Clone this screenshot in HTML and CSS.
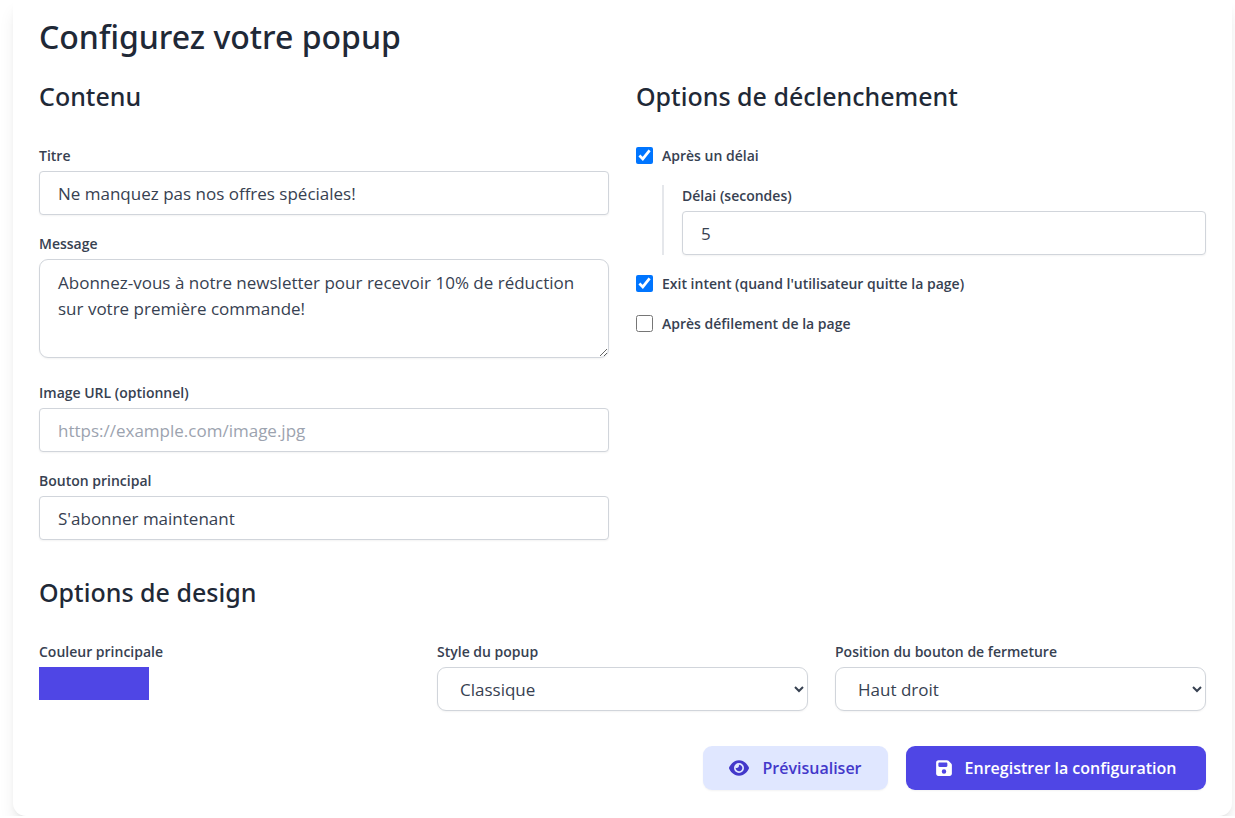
FILE: index.html
```html
<!DOCTYPE html>
<html lang="fr">
<head>
<meta charset="utf-8">
<meta name="viewport" content="width=device-width, initial-scale=1">
<title>Configurez votre popup</title>
<link rel="stylesheet" href="styles.css">
</head>
<body>
<main class="card">
  <h1 class="title">Configurez votre popup</h1>
  <form class="form">
    <div class="columns">
      <section class="section">
        <h2 class="heading">Contenu</h2>
        <div class="fields">
          <div class="field">
            <label class="label" for="titre">Titre</label>
            <input class="input" id="titre" type="text" value="Ne manquez pas nos offres spéciales!">
          </div>
          <div class="field field-message">
            <label class="label" for="message">Message</label>
            <textarea class="input textarea" id="message" rows="3">Abonnez-vous à notre newsletter pour recevoir 10% de réduction sur votre première commande!</textarea>
          </div>
          <div class="field">
            <label class="label" for="image">Image URL (optionnel)</label>
            <input class="input" id="image" type="text" placeholder="https://example.com/image.jpg">
          </div>
          <div class="field">
            <label class="label" for="bouton">Bouton principal</label>
            <input class="input" id="bouton" type="text" value="S'abonner maintenant">
          </div>
        </div>
      </section>
      <section class="section">
        <h2 class="heading">Options de déclenchement</h2>
        <div class="fields">
          <div class="check">
            <input class="checkbox" id="delai-actif" type="checkbox" checked>
            <label class="label" for="delai-actif">Après un délai</label>
          </div>
          <div class="field nested">
            <label class="label" for="delai">Délai (secondes)</label>
            <input class="input" id="delai" type="number" value="5">
          </div>
          <div class="check">
            <input class="checkbox" id="exit" type="checkbox" checked>
            <label class="label" for="exit">Exit intent (quand l'utilisateur quitte la page)</label>
          </div>
          <div class="check">
            <input class="checkbox" id="scroll" type="checkbox">
            <label class="label" for="scroll">Après défilement de la page</label>
          </div>
        </div>
      </section>
    </div>
    <section class="section">
      <h2 class="heading">Options de design</h2>
      <div class="columns columns-three">
        <div class="field">
          <label class="label" for="couleur">Couleur principale</label>
          <input class="swatch" id="couleur" type="color" value="#4f46e5">
        </div>
        <div class="field">
          <label class="label" for="style">Style du popup</label>
          <select class="input select" id="style"><option>Classique</option></select>
        </div>
        <div class="field">
          <label class="label" for="position">Position du bouton de fermeture</label>
          <select class="input select" id="position"><option>Haut droit</option></select>
        </div>
      </div>
    </section>
    <div class="actions">
      <button class="button button-light" type="button">
        <svg class="icon icon-eye" viewBox="0 0 576 512" aria-hidden="true"><path fill="currentColor" d="M288 32c-80.800 0-145.500 36.800-192.600 80.600C48.600 156 17.300 208 2.500 243.700c-3.300 7.900-3.300 16.700 0 24.600C17.300 304 48.600 356 95.400 399.400C142.500 443.200 207.200 480 288 480s145.500-36.800 192.600-80.600c46.800-43.500 78.100-95.400 93-131.100c3.300-7.900 3.300-16.700 0-24.600c-14.900-35.700-46.200-87.700-93-131.100C433.500 68.800 368.800 32 288 32zM144 256a144 144 0 1 1 288 0 144 144 0 1 1-288 0zm144-64c0 35.300-28.700 64-64 64c-7.100 0-13.900-1.200-20.300-3.300c-5.500-1.800-11.900 1.600-11.700 7.400c.3 6.900 1.300 13.800 3.200 20.700c13.700 51.200 66.400 81.600 117.600 67.900s81.600-66.400 67.900-117.600c-11.100-41.500-47.800-69.400-88.600-71.100c-5.800-.2-9.200 6.100-7.400 11.700c2.100 6.400 3.300 13.200 3.300 20.300z"/></svg>
        <span>Prévisualiser</span>
      </button>
      <button class="button button-dark" type="submit">
        <svg class="icon icon-save" viewBox="0 0 448 512" aria-hidden="true"><path fill="currentColor" d="M64 32C28.700 32 0 60.700 0 96V416c0 35.300 28.700 64 64 64H384c35.300 0 64-28.700 64-64V173.300c0-17-6.700-33.300-18.700-45.300L352 50.700C340 38.700 323.700 32 306.700 32H64zm0 96c0-17.700 14.300-32 32-32H288c17.700 0 32 14.300 32 32v64c0 17.700-14.300 32-32 32H96c-17.700 0-32-14.300-32-32V128zM224 288a64 64 0 1 1 0 128 64 64 0 1 1 0-128z"/></svg>
        <span>Enregistrer la configuration</span>
      </button>
    </div>
  </form>
</main>
</body>
</html>
```
FILE: styles.css
```css
*, *::before, *::after {
  box-sizing: border-box;
}

body {
  margin: 0;
  padding: 0 3px 0 13px;
  background: #fff;
  color: #1f2937;
  font-family: "Noto Sans", "Open Sans", sans-serif;
}

.card {
  padding: 17px 26px 26px;
  background: #fff;
  border-radius: 0 0 13px 13px;
  box-shadow: 0 11px 17px -3px rgba(0, 0, 0, 0.1), 0 4px 7px -4px rgba(0, 0, 0, 0.1);
}

.title {
  margin: 0 0 22px;
  font-size: 32px;
  font-weight: 500;
  line-height: 40px;
}

.form {
  display: flex;
  flex-direction: column;
  gap: 35px;
}

.heading {
  margin: 0 0 31px;
  font-size: 25px;
  font-weight: 500;
  line-height: 35px;
}

.columns {
  display: grid;
  grid-template-columns: repeat(2, minmax(0, 1fr));
  gap: 27px;
}

.columns-three {
  grid-template-columns: repeat(3, minmax(0, 1fr));
}

.fields {
  display: flex;
  flex-direction: column;
  gap: 18px;
}

.field {
  display: flex;
  flex-direction: column;
  align-items: flex-start;
  gap: 4px;
}

.field-message {
  padding-bottom: 6px;
}

.label {
  color: #374151;
  font-family: "Open Sans", "Noto Sans", sans-serif;
  font-size: 14px;
  font-weight: 600;
  line-height: 22px;
}

.input {
  width: 100%;
  height: 44px;
  margin: 0;
  padding: 8px 18px;
  border: 1px solid #d1d5db;
  border-radius: 4px;
  background: #fff;
  box-shadow: 0 1px 2px rgba(0, 0, 0, 0.05);
  color: #374151;
  font-family: "Open Sans", "Noto Sans", sans-serif;
  font-size: 17px;
  line-height: 26px;
}

.input::placeholder {
  color: #9ca3af;
  opacity: 1;
}

.textarea {
  display: block;
  height: 99px;
  border-radius: 9px;
  padding: 10px 18px;
  resize: vertical;
}

.select {
  border-radius: 9px;
}

.swatch {
  width: 110px;
  height: 33px;
  padding: 0;
  border: 0;
  background: #4f46e5;
}

.swatch::-webkit-color-swatch-wrapper {
  padding: 0;
}

.swatch::-webkit-color-swatch {
  border: 0;
}

.check {
  display: flex;
  align-items: flex-start;
  gap: 9px;
}

.checkbox {
  width: 17px;
  height: 17px;
  margin: 2px 0 0;
}

.nested {
  margin-left: 26px;
  padding-left: 18px;
  border-left: 2px solid #e5e7eb;
}

.actions {
  display: flex;
  justify-content: flex-end;
  gap: 18px;
}

.button {
  display: flex;
  align-items: center;
  justify-content: center;
  height: 44px;
  padding: 0 26px;
  border: 0;
  border-radius: 9px;
  box-shadow: 0 1px 2px rgba(0, 0, 0, 0.05);
  font-family: "Open Sans", "Noto Sans", sans-serif;
  font-size: 16px;
  font-weight: 600;
  line-height: 26px;
  gap: 13px;
}

.button-light {
  min-width: 185px;
  background: #e0e7ff;
  color: #4338ca;
}

.button-dark {
  min-width: 300px;
  background: #4f46e5;
  color: #fff;
}

.icon {
  height: 18px;
}

.icon-eye {
  width: 20px;
}

.icon-save {
  width: 16px;
}
```
